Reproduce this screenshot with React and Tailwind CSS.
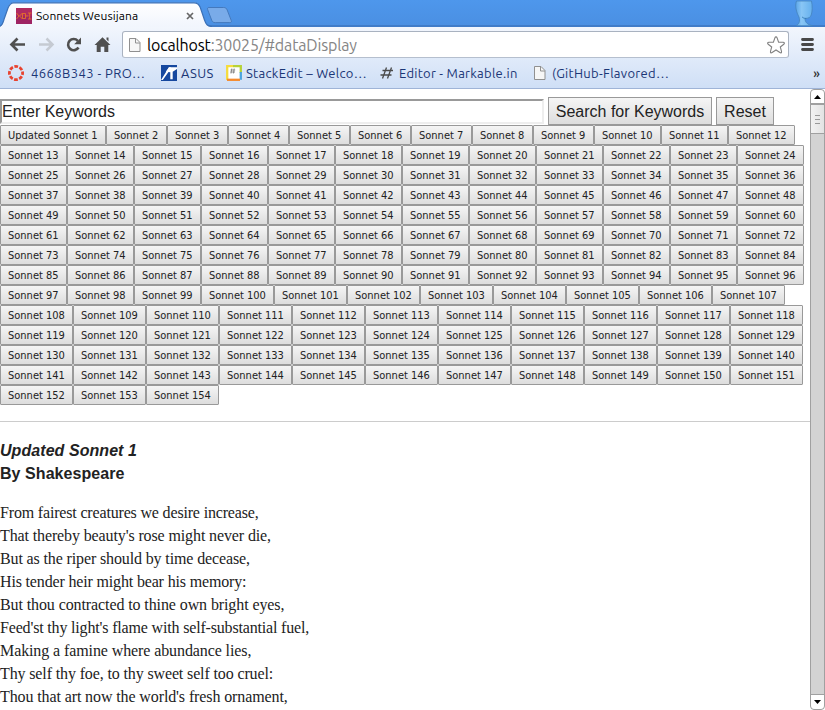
import React from 'react';

const UI = 'font-["Ubuntu","Noto_Sans",sans-serif]';

const range = (from, to) => Array.from({ length: to - from + 1 }, (_, i) => from + i);

const rows = [
  range(1, 12), range(13, 24), range(25, 36), range(37, 48), range(49, 60), range(61, 72),
  range(73, 84), range(85, 96), range(97, 107), range(108, 118), range(119, 129),
  range(130, 140), range(141, 151), range(152, 154),
];

const lines = [
  ['From fairest creatures we desire increase,', 'tracking-[-0.17px]'],
  ["That thereby beauty's rose might never die,", 'tracking-[-0.12px]'],
  ['But as the riper should by time decease,', 'tracking-[-0.13px]'],
  ['His tender heir might bear his memory:', 'tracking-[-0.16px]'],
  ['But thou contracted to thine own bright eyes,', 'tracking-[-0.1px]'],
  ["Feed'st thy light's flame with self-substantial fuel,", 'tracking-[-0.17px]'],
  ['Making a famine where abundance lies,', 'tracking-[-0.1px]'],
  ['Thy self thy foe, to thy sweet self too cruel:', 'tracking-[-0.13px]'],
  ["Thou that art now the world's fresh ornament,", 'tracking-[-0.11px]'],
];

function buttonWidth(n) {
  if (n === 1) return 'w-[106px]';
  if (n < 10) return 'w-[61px]';
  if (n < 100) return 'w-[67px]';
  return 'w-[73px]';
}

function PageIcon({ className }) {
  return (
    <svg className={className} width="12" height="16" viewBox="0 0 12 16" fill="none">
      <path d="M.5 1.500h6.500l4 4v9H.5z" fill="#f6f6f6" stroke="#909090" />
      <path d="M6.500 1.500v4.500H11" stroke="#909090" />
    </svg>
  );
}

function TabStrip() {
  return (
    <div className="relative h-[27px] bg-gradient-to-b from-[#4e97ec] to-[#4a8fe2]">
      <svg className="absolute left-0 top-0" width="825" height="27" viewBox="0 0 825 27">
        <defs>
          <linearGradient id="tab" x1="0" y1="0" x2="0" y2="1">
            <stop offset="0" stopColor="#fff" />
            <stop offset="1" stopColor="#f1f5fd" />
          </linearGradient>
          <linearGradient id="person" x1="0" y1="0" x2="1" y2="0">
            <stop offset="0" stopColor="#5ba5e8" />
            <stop offset=".35" stopColor="#89c6f5" />
            <stop offset="1" stopColor="#65b0ee" />
          </linearGradient>
        </defs>
        <path d="M0 26h825" stroke="#3668ad" />
        <path d="M-1 27C3 26 3 22 4.500 18L8 8c1.400-3.700 2.500-5.200 5.500-5.200H194c3.600 0 5 1.200 6.300 4.700l4.200 12.500c1.500 4.400 2.800 6.600 7.500 7z" fill="url(#tab)" />
        <path d="M-1 26.500C3 25.500 3 22 4.500 18L8 8c1.400-3.700 2.500-5.200 5.500-5.200H194c3.600 0 5 1.200 6.300 4.700l4.200 12.500c1.500 4.400 2.800 6.200 7.500 6.500" fill="none" stroke="#3c71b7" strokeWidth="1.200" />
        <path d="M209 7.500h14.500c2 0 3 .7 3.700 2.500l4 10.300c.6 1.600.2 2.300-1.400 2.300h-14.500c-2 0-3-.7-3.600-2.400l-4-10.500c-.5-1.500-.1-2.200 1.300-2.200z" fill="#79abe9" stroke="#4479bd" />
        <path d="M796.500 1h15c1 5 .9 10.500-.3 14-.8 2.400-2.300 3.200-6.200 3.500 0 3.800 2.500 6.200 7.500 7.200H796c3.200-1.500 4.300-4.500 3-8.700C796.300 12 794.700 6 796.500 1z" fill="url(#person)" stroke="#4584bd" strokeWidth=".8" />
        <path d="M806.200 18.500c-2.200-.1-3.300-.7-4.200-1.700" stroke="#377eb9" fill="none" />
      </svg>
      <div className="relative flex h-[27px] items-center pl-4 pt-[5px]">
        <svg width="16" height="16" viewBox="0 0 16 16" className="shrink-0">
          <rect width="16" height="16" fill="#b02a60" />
          <rect y="8" width="16" height="8" fill="#8e1d66" opacity=".5" />
          <path d="M.5 5L3 8 .5 11M6.500 5L3.500 8l3 3M6.500 5.500h3v5h-3zM9.500 8h3M12 5h3.500M13.700 5v6M12 11h3.500" stroke="#ed7a25" strokeWidth=".8" fill="none" />
        </svg>
        <span className={`${UI} ml-1 w-[104px] whitespace-nowrap text-[12px] leading-4 tracking-[0.07px] text-black`}>Sonnets Weusijana</span>
        <svg className="-mt-px ml-[46px]" width="8" height="8" viewBox="0 0 8 8">
          <path d="M1 1l6 6M7 1L1 7" stroke="#666" strokeWidth="1.700" />
        </svg>
      </div>
    </div>
  );
}

function Toolbar() {
  return (
    <div className="flex h-[33px] items-start pl-2">
      <svg width="106" height="33" viewBox="0 0 106 33" fill="none" className="shrink-0">
        <path d="M17 17.500H4.500M9.500 11.500l-6 6 6 6" stroke="#505050" strokeWidth="2.700" />
        <path d="M31 17.500h12.500M38.500 11.500l6 6-6 6" stroke="#c5cad2" strokeWidth="2.500" />
        <path d="M70.500 20.500a5.600 5.600 0 1 1-.7-6.700" stroke="#505050" strokeWidth="2.600" />
        <path d="M73 10.500v6.800h-6.800z" fill="#505050" />
        <path d="M94.500 10.200l8 7.800h-2.200v7h-4v-5.200h-3.600V25h-4v-7h-2.200zM98.500 10.500h2v4l-2-2z" fill="#505050" />
      </svg>
      <div className="ml-2 mt-1 flex h-[27px] w-[667px] shrink-0 items-center rounded-[3px] border border-[#a9b2c0] border-b-[#b5bfce] bg-white">
        <PageIcon className="ml-[6px] shrink-0" />
        <span className={`${UI} ml-[6px] whitespace-nowrap text-[16px] leading-5 tracking-[-0.16px] text-[#858585]`}>
          <span className="text-black">localhost</span>:30025/#dataDisplay
        </span>
        <svg className="ml-auto mr-[2px] shrink-0" width="20" height="20" viewBox="0 0 20 20" fill="none">
          <path d="M10 1.900c.6 0 .9.400 1.100 1l1.500 4.200 4.500.2c1.400.1 1.700 1.100.7 1.900l-3.500 2.800 1.200 4.300c.3 1.400-.5 2-1.600 1.200L10 15l-3.900 2.500c-1.100.8-1.900.2-1.600-1.200L5.700 12 2.200 9.200c-1-.8-.7-1.800.7-1.900l4.500-.2 1.500-4.200c.2-.6.500-1 1.100-1z" stroke="#818181" strokeWidth="1.100" />
        </svg>
      </div>
      <svg className="ml-3 mt-[11px] shrink-0" width="13" height="13" viewBox="0 0 13 13">
        <path d="M1.500 1.500h10M1.500 6.500h10M1.500 11.500h10" stroke="#484848" strokeWidth="2.800" strokeLinecap="round" />
      </svg>
    </div>
  );
}

function Bookmarks() {
  const label = `${UI} whitespace-nowrap text-[13px] leading-4 text-[#1b3676]`;
  return (
    <div className="flex h-[26px] items-center pl-2">
      <svg width="16" height="16" viewBox="0 0 16 16" className="shrink-0">
        <circle cx="8" cy="8" r="6.600" fill="none" stroke="#e8432f" strokeWidth="2.800" strokeDasharray="3.700 1.484" strokeDashoffset="1.850" />
      </svg>
      <span className={`${label} ml-[7px] w-[122px] tracking-[0.43px]`}>4668B343 - PRO…</span>
      <svg className="ml-2 shrink-0" width="16" height="16" viewBox="0 0 16 16">
        <rect width="16" height="16" fill="#16489f" />
        <path d="M8 2.300h8v1.800l-4.300 2.700v7.400H9.300V7.300L7.500 7l-5.700 8H0z" fill="#fff" />
        <path d="M4.800 6.800L8 2.300h2L6.800 7z" fill="#fff" />
      </svg>
      <span className={`${label} ml-1 w-[33px] tracking-[0.4px]`}>ASUS</span>
      <svg className="ml-3 shrink-0" width="16" height="16" viewBox="0 0 16 16">
        <rect x="1.250" y="1.250" width="13.500" height="13.500" rx="1" fill="#fff" />
        <path d="M1.200 15V1.200h6" stroke="#f5dc3d" strokeWidth="2.300" fill="none" />
        <path d="M7 1.200h7.800V8" stroke="#b6d238" strokeWidth="2.300" fill="none" />
        <path d="M14.800 7v7.800" stroke="#4ba4df" strokeWidth="2.300" fill="none" />
        <path d="M1 14.800h13" stroke="#f58a2c" strokeWidth="2.300" />
        <path d="M5.800 3.500L5 8.500M8.200 3.500l-.8 5M4.500 5h4.700M4.300 7H9" stroke="#777" strokeWidth=".8" />
      </svg>
      <span className={`${label} ml-1 w-[121px] tracking-[0.3px]`}>StackEdit – Welco…</span>
      <svg className="ml-[13px] shrink-0" width="14" height="14" viewBox="0 0 14 14">
        <path d="M6.500 1.500L2.500 12.500M11.500 1.500l-4 11M2.500 4.500H13M.5 9h11" stroke="#4b4b4b" strokeWidth="1.300" />
      </svg>
      <span className={`${label} ml-[5px] w-[120px] tracking-[0.26px]`}>Editor - Markable.in</span>
      <PageIcon className="ml-[15px] shrink-0" />
      <span className={`${label} ml-[6px] w-[118px] tracking-[0.3px]`}>(GitHub-Flavored…</span>
      <span className={`${UI} ml-auto mr-[5px] text-[13px] font-medium leading-4 text-[#303030]`}>»</span>
    </div>
  );
}

function Scrollbar() {
  return (
    <div className="flex h-[621px] w-[15px] shrink-0 flex-col rounded-[4px] border border-[#a0a0a0] bg-[#d3d3d3]">
      <div className="flex h-[15px] items-center justify-center rounded-t-[4px] border-b-2 border-[#a0a0a0] bg-white">
        <svg width="7" height="4" viewBox="0 0 7 4"><path d="M3.500 0L7 4H0z" fill="#000" /></svg>
      </div>
      <div className="flex h-[29px] flex-col items-center justify-center gap-[3px] border-b border-[#a0a0a0] bg-gradient-to-r from-[#f2f2f2] to-[#e3e3e3]">
        <div className="h-px w-[5px] bg-[#999]" />
        <div className="h-px w-[5px] bg-[#999]" />
        <div className="h-px w-[5px] bg-[#999]" />
      </div>
      <div className="mt-auto flex h-[15px] items-center justify-center rounded-b-[4px] border-t border-[#a0a0a0] bg-white">
        <svg width="7" height="4" viewBox="0 0 7 4"><path d="M0 0h7L3.500 4z" fill="#000" /></svg>
      </div>
    </div>
  );
}

export default function App() {
  const face = 'border border-[#999] bg-gradient-to-b from-[#f5f5f5] to-[#dddddd] text-[#222]';
  return (
    <div className="h-[710px] w-[825px] overflow-hidden bg-white">
      <TabStrip />
      <div className="h-[62px] border-b border-[#9fb4d7] bg-gradient-to-b from-[#f2f6fd] to-[#cfdff6]">
        <Toolbar />
        <Bookmarks />
      </div>
      <div className="flex h-[621px]">
        <div className="w-[810px] shrink-0 overflow-hidden pt-2 font-['Liberation_Sans',Arial,sans-serif] text-[#222]">
          <div className="flex h-7 items-start gap-1">
            <input
              className="mt-[2px] h-[25px] w-[544px] border-2 border-b-[#eee] border-l-[#999] border-r-[#eee] border-t-[#999] bg-white text-[16px] text-[#222] outline-none"
              defaultValue="Enter Keywords"
            />
            <button className={`${face} h-7 w-[164px] whitespace-nowrap pt-px text-[16px]`}>Search for Keywords</button>
            <button className={`${face} h-7 w-[58px] pt-px text-[16px]`}>Reset</button>
          </div>
          {rows.map((row) => (
            <div key={row[0]} className="flex h-5">
              {row.map((n) => (
                <button
                  key={n}
                  className={`${face} ${buttonWidth(n)} h-5 shrink-0 whitespace-nowrap rounded-[1px] pl-[7px] pt-px text-left font-['DejaVu_Sans_Condensed','DejaVu_Sans',sans-serif] text-[11px] leading-[17px] [font-stretch:condensed]`}
                >
                  {n === 1 ? 'Updated Sonnet 1' : `Sonnet ${n}`}
                </button>
              ))}
            </div>
          ))}
          <hr className="mt-4 border-[#ccc]" />
          <h1 className="mt-[17px] text-[16px] font-bold leading-[23px] tracking-[0.06px]">
            <em>Updated Sonnet 1</em>
            <br />
            By Shakespeare
          </h1>
          <div className="mt-4 whitespace-nowrap font-['Liberation_Serif','Times_New_Roman',serif] text-[16px] leading-[23px]">
            {lines.map(([line, tracking]) => <div key={line} className={tracking}>{line}</div>)}
          </div>
        </div>
        <Scrollbar />
      </div>
    </div>
  );
}
